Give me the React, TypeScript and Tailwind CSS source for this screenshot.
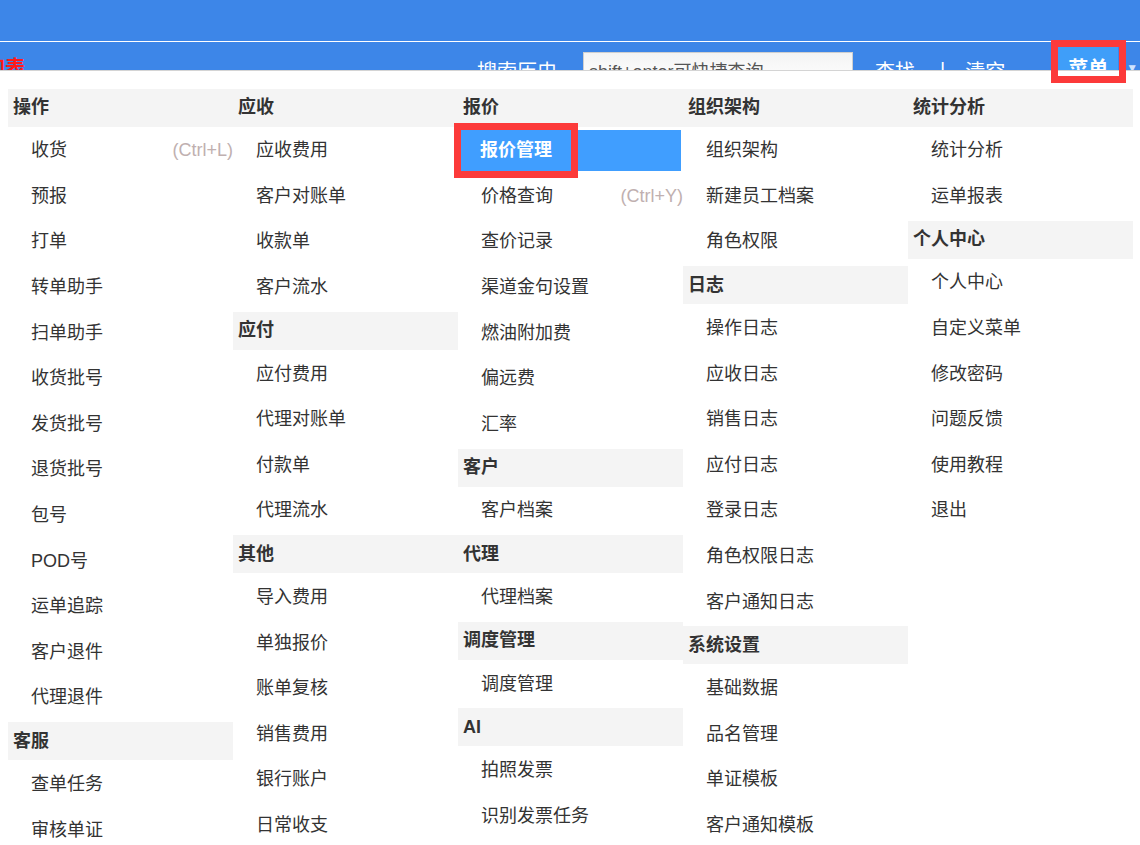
import React from "react";

type Item = { label: string; shortcut?: string; active?: boolean };
type Group = { title: string; items: Item[] };

const columns: Group[][] = [
  [
    {
      title: "操作",
      items: [
        { label: "收货", shortcut: "(Ctrl+L)" },
        { label: "预报" },
        { label: "打单" },
        { label: "转单助手" },
        { label: "扫单助手" },
        { label: "收货批号" },
        { label: "发货批号" },
        { label: "退货批号" },
        { label: "包号" },
        { label: "POD号" },
        { label: "运单追踪" },
        { label: "客户退件" },
        { label: "代理退件" },
      ],
    },
    { title: "客服", items: [{ label: "查单任务" }, { label: "审核单证" }] },
  ],
  [
    {
      title: "应收",
      items: [{ label: "应收费用" }, { label: "客户对账单" }, { label: "收款单" }, { label: "客户流水" }],
    },
    {
      title: "应付",
      items: [{ label: "应付费用" }, { label: "代理对账单" }, { label: "付款单" }, { label: "代理流水" }],
    },
    {
      title: "其他",
      items: [
        { label: "导入费用" },
        { label: "单独报价" },
        { label: "账单复核" },
        { label: "销售费用" },
        { label: "银行账户" },
        { label: "日常收支" },
      ],
    },
  ],
  [
    {
      title: "报价",
      items: [
        { label: "报价管理", active: true },
        { label: "价格查询", shortcut: "(Ctrl+Y)" },
        { label: "查价记录" },
        { label: "渠道金句设置" },
        { label: "燃油附加费" },
        { label: "偏远费" },
        { label: "汇率" },
      ],
    },
    { title: "客户", items: [{ label: "客户档案" }] },
    { title: "代理", items: [{ label: "代理档案" }] },
    { title: "调度管理", items: [{ label: "调度管理" }] },
    { title: "AI", items: [{ label: "拍照发票" }, { label: "识别发票任务" }] },
  ],
  [
    {
      title: "组织架构",
      items: [{ label: "组织架构" }, { label: "新建员工档案" }, { label: "角色权限" }],
    },
    {
      title: "日志",
      items: [
        { label: "操作日志" },
        { label: "应收日志" },
        { label: "销售日志" },
        { label: "应付日志" },
        { label: "登录日志" },
        { label: "角色权限日志" },
        { label: "客户通知日志" },
      ],
    },
    {
      title: "系统设置",
      items: [{ label: "基础数据" }, { label: "品名管理" }, { label: "单证模板" }, { label: "客户通知模板" }],
    },
  ],
  [
    { title: "统计分析", items: [{ label: "统计分析" }, { label: "运单报表" }] },
    {
      title: "个人中心",
      items: [
        { label: "个人中心" },
        { label: "自定义菜单" },
        { label: "修改密码" },
        { label: "问题反馈" },
        { label: "使用教程" },
        { label: "退出" },
      ],
    },
  ],
];

const FONT = { fontFamily: '"Liberation Sans", "Noto Sans CJK SC", sans-serif' };

function MenuItem({ item }: { item: Item }) {
  if (item.active) {
    return (
      <div className="relative mx-[2px] my-[2.3px] h-[41px] shrink-0 flex items-center pl-[20px] bg-[#409eff] text-white font-bold text-[18px] whitespace-nowrap">
        {item.label}
        <div className="absolute left-[-6px] top-[-7px] w-[124px] h-[55px] border-[7px] border-[#fc3a3a]" />
      </div>
    );
  }
  return (
    <div className="mx-[2px] my-[2.3px] h-[41px] shrink-0 flex items-center justify-between pl-[21px] text-[18px] text-[#333] whitespace-nowrap">
      <span>{item.label}</span>
      {item.shortcut && <span className="text-[#c0b0b0] mr-[-2px]">{item.shortcut}</span>}
    </div>
  );
}

export default function App() {
  return (
    <div className="relative w-[1140px] h-[845px] overflow-hidden bg-white" style={FONT}>
      {/* top bar */}
      <div className="h-[41px] bg-[#3d86e8]" />
      <div className="h-px bg-white" />
      <div className="h-[28px] bg-[#3d86e8] overflow-hidden flex items-start">
        <div className="w-[40px] overflow-hidden mt-[14px] shrink-0">
          <span className="block ml-[-15px] text-[20px] leading-[24px] font-bold text-[#ff1a1a] whitespace-nowrap">加表</span>
        </div>
        <span className="ml-[437px] mt-[18px] text-[20px] leading-[24px] text-white whitespace-nowrap">搜索历史</span>
        <div className="ml-[26px] mt-[10px] w-[270px] h-[32px] shrink-0 border border-[#cfcfcf] bg-gradient-to-b from-[#f4f4f4] to-white px-[5px] pt-[9px] text-[18px] leading-[20px] text-[#555] whitespace-nowrap">
          shift+enter可快捷查询
        </div>
        <span className="ml-[22px] mt-[18px] text-[20px] leading-[24px] text-white whitespace-nowrap">查找</span>
        <span className="ml-[25px] mt-[16px] text-[20px] leading-[24px] text-white">|</span>
        <span className="ml-[20px] mt-[18px] text-[20px] leading-[24px] text-white whitespace-nowrap">清空</span>
        <div className="ml-[53px] mt-[5px] w-[60px] h-[30px] shrink-0 bg-[#3f9ef9] flex items-start pl-[10px] pt-[10px]">
          <span className="text-[20px] leading-[24px] font-bold text-white whitespace-nowrap">菜单</span>
        </div>
        <span className="ml-[8px] mt-[17px] text-[12px] text-[#cfe3ff]">▼</span>
      </div>

      {/* dropdown menu panel */}
      <div className="border-t border-[#d4d4d4] bg-white pt-[16px] pl-[8px] flex items-start">
        {columns.map((groups, ci) => (
          <div key={ci} className="w-[225px] shrink-0 flex flex-col">
            {groups.map((g) => (
              <React.Fragment key={g.title}>
                <div className="my-[1.5px] h-[38px] shrink-0 bg-[#f4f4f4] flex items-center pl-[5px] text-[18px] font-bold text-[#333] whitespace-nowrap">
                  {g.title}
                </div>
                {g.items.map((it) => (
                  <MenuItem key={g.title + it.label} item={it} />
                ))}
              </React.Fragment>
            ))}
          </div>
        ))}
      </div>

      {/* annotation box around 菜单 */}
      <div className="absolute left-[1051px] top-[40px] w-[75px] h-[43px] border-[7px] border-[#fc3a3a]" />
    </div>
  );
}
